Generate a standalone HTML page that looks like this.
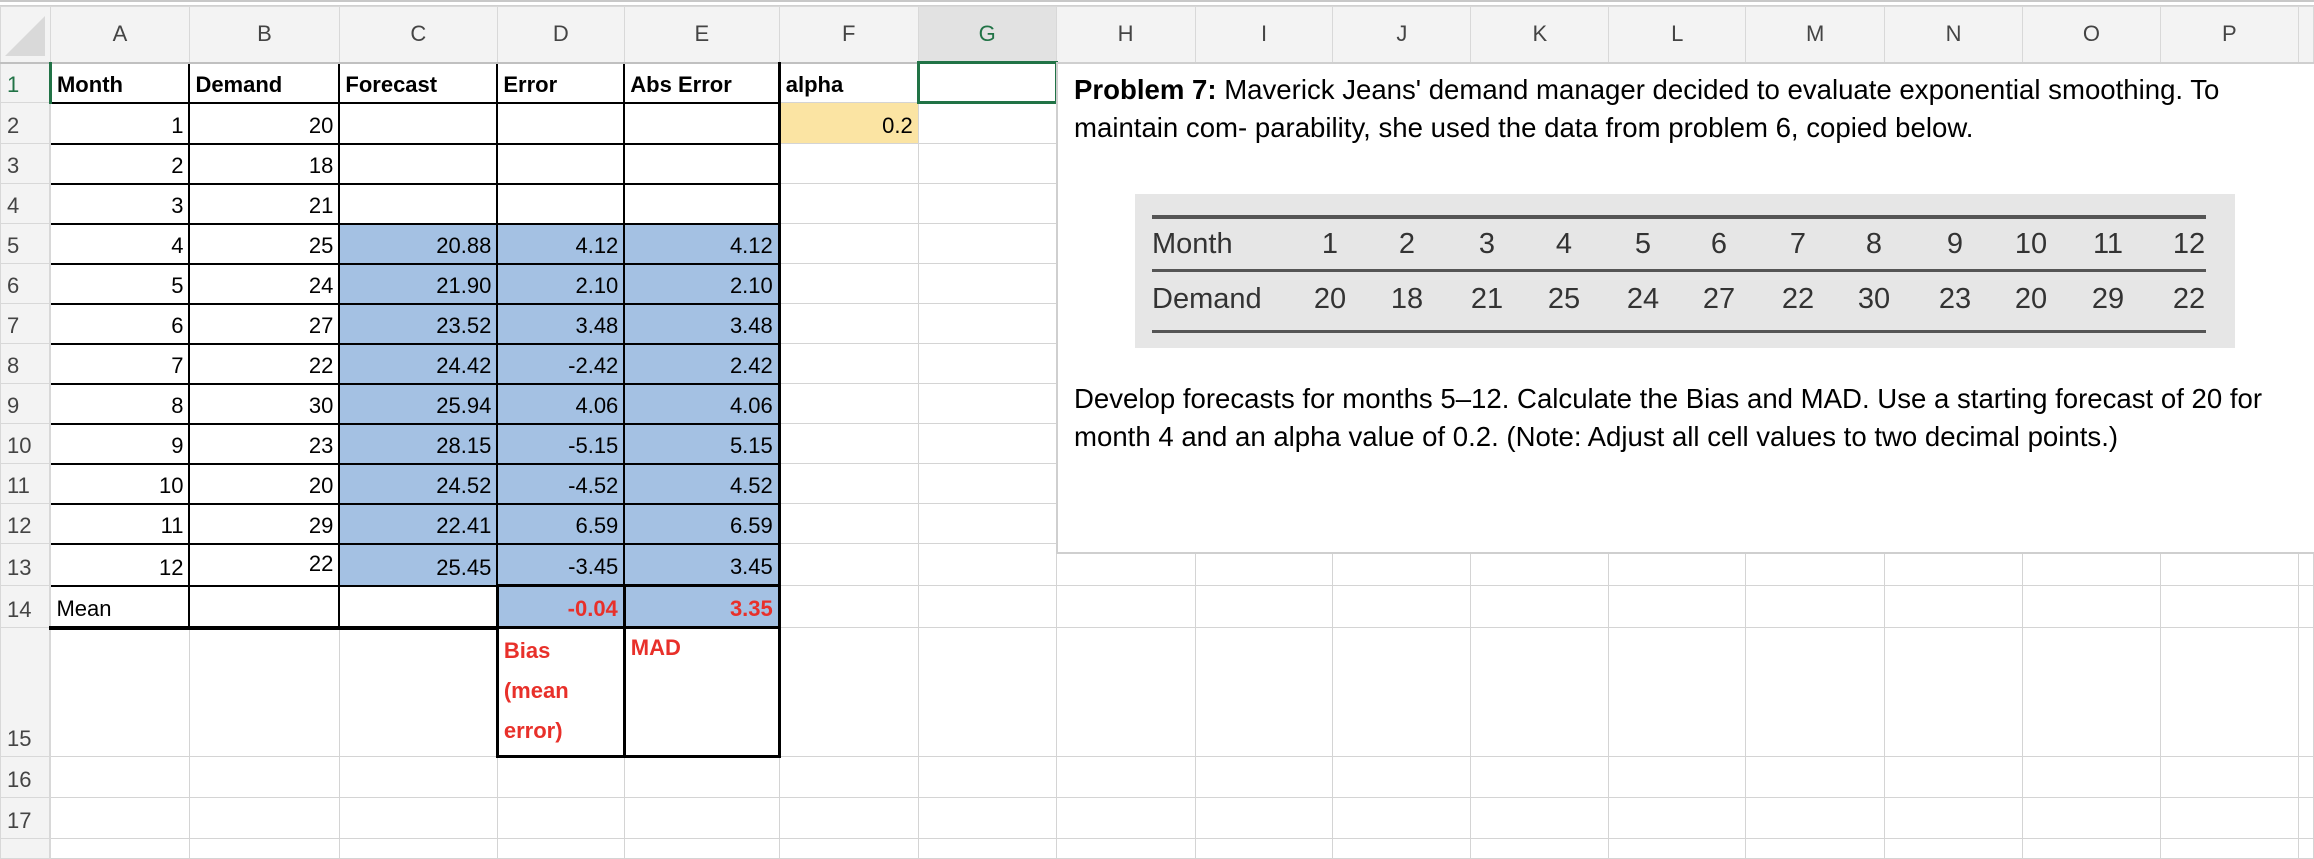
<!DOCTYPE html>
<html><head><meta charset="utf-8"><style>
*{margin:0;padding:0;box-sizing:border-box}
body{width:2314px;height:845px;overflow:hidden;background:#fff;font-family:"Liberation Sans",Arial,sans-serif;position:relative}
.top{position:absolute;left:0;top:0;width:2314px;height:6px;background:#fff;border-top:2px solid #c8c8c8;border-bottom:1px solid #d0d0d0}
table{position:absolute;left:0;top:6px;border-collapse:collapse;table-layout:fixed}
td{border:1px solid #d4d4d4;font-size:22px;color:#000;padding:0 5px;white-space:nowrap;overflow:visible;vertical-align:bottom;padding-bottom:4px}
tr.h td{background:#f3f3f3;color:#444;text-align:center;font-size:22px;vertical-align:middle;border-color:#d8d8d8;border-bottom:2px solid #c0c0c0;padding:0}
td.rh{background:#f3f3f3;color:#444;text-align:left;padding-left:6px;font-size:22px;border-right:2px solid #c0c0c0;border-color:#d8d8d8}
.r{text-align:right}
.b{font-weight:bold}
.bl{background:#a4c1e3}
.y{background:#fbe4a3}
.k{border:2px solid #000}
.kr{border-right:3px solid #000}
.red{color:#e8302a;font-weight:bold}
.box{position:absolute;left:1056px;top:62px;width:1262px;height:492px;background:#fff;border:2px solid #cfcfcf;border-right:none}
.ln{position:absolute;left:16px;font-size:28px;white-space:nowrap;transform:scaleX(0.985);transform-origin:left;color:#000}
.img{position:absolute;left:77px;top:130px;width:1100px;height:154px;background:#e6e6e6}
.hr{position:absolute;left:17px;width:1054px;height:4px;background:#555}
.t{position:absolute;font-size:29px;color:#333;transform:translateX(-50%);white-space:nowrap}
</style></head><body>
<div class="top"></div>
<table>
<colgroup><col style="width:50px"><col style="width:139px"><col style="width:150px"><col style="width:158px"><col style="width:127px"><col style="width:155px"><col style="width:139px"><col style="width:138px"><col style="width:139px"><col style="width:138px"><col style="width:138px"><col style="width:138px"><col style="width:137px"><col style="width:139px"><col style="width:138px"><col style="width:138px"><col style="width:138px"><col style="width:15px"></colgroup>
<tr class="h" style="height:56px"><td style="background:#f3f3f3"><svg width="44" height="44" style="display:block;margin:4px 0 0 2px"><polygon points="42,2 42,42 2,42" fill="#d9d9d9"/></svg></td><td>A</td><td>B</td><td>C</td><td>D</td><td>E</td><td>F</td><td style="color:#217346;background:#e2e2e2;border-bottom:2px solid #217346">G</td><td>H</td><td>I</td><td>J</td><td>K</td><td>L</td><td>M</td><td>N</td><td>O</td><td>P</td><td></td></tr>
<tr style="height:40px"><td class="rh" style="color:#217346">1</td><td class="k b" style="border-left:3px solid #217346">Month</td><td class="k b">Demand</td><td class="k b">Forecast</td><td class="k b">Error</td><td class="k b kr">Abs Error</td><td class="b">alpha</td><td style="border:3px solid #217346"></td><td></td><td></td><td></td><td></td><td></td><td></td><td></td><td></td><td></td><td></td></tr>
<tr style="height:41px"><td class="rh">2</td><td class="k r">1</td><td class="k r">20</td><td class="k"></td><td class="k"></td><td class="k kr"></td><td class="y r">0.2</td><td></td><td></td><td></td><td></td><td></td><td></td><td></td><td></td><td></td><td></td><td></td></tr>
<tr style="height:40px"><td class="rh">3</td><td class="k r">2</td><td class="k r">18</td><td class="k"></td><td class="k"></td><td class="k kr"></td><td></td><td></td><td></td><td></td><td></td><td></td><td></td><td></td><td></td><td></td><td></td><td></td></tr>
<tr style="height:40px"><td class="rh">4</td><td class="k r">3</td><td class="k r">21</td><td class="k"></td><td class="k"></td><td class="k kr"></td><td></td><td></td><td></td><td></td><td></td><td></td><td></td><td></td><td></td><td></td><td></td><td></td></tr>
<tr style="height:40px"><td class="rh">5</td><td class="k r">4</td><td class="k r">25</td><td class="k r bl">20.88</td><td class="k r bl">4.12</td><td class="k kr r bl">4.12</td><td></td><td></td><td></td><td></td><td></td><td></td><td></td><td></td><td></td><td></td><td></td><td></td></tr>
<tr style="height:40px"><td class="rh">6</td><td class="k r">5</td><td class="k r">24</td><td class="k r bl">21.90</td><td class="k r bl">2.10</td><td class="k kr r bl">2.10</td><td></td><td></td><td></td><td></td><td></td><td></td><td></td><td></td><td></td><td></td><td></td><td></td></tr>
<tr style="height:40px"><td class="rh">7</td><td class="k r">6</td><td class="k r">27</td><td class="k r bl">23.52</td><td class="k r bl">3.48</td><td class="k kr r bl">3.48</td><td></td><td></td><td></td><td></td><td></td><td></td><td></td><td></td><td></td><td></td><td></td><td></td></tr>
<tr style="height:40px"><td class="rh">8</td><td class="k r">7</td><td class="k r">22</td><td class="k r bl">24.42</td><td class="k r bl">-2.42</td><td class="k kr r bl">2.42</td><td></td><td></td><td></td><td></td><td></td><td></td><td></td><td></td><td></td><td></td><td></td><td></td></tr>
<tr style="height:40px"><td class="rh">9</td><td class="k r">8</td><td class="k r">30</td><td class="k r bl">25.94</td><td class="k r bl">4.06</td><td class="k kr r bl">4.06</td><td></td><td></td><td></td><td></td><td></td><td></td><td></td><td></td><td></td><td></td><td></td><td></td></tr>
<tr style="height:40px"><td class="rh">10</td><td class="k r">9</td><td class="k r">23</td><td class="k r bl">28.15</td><td class="k r bl">-5.15</td><td class="k kr r bl">5.15</td><td></td><td></td><td></td><td></td><td></td><td></td><td></td><td></td><td></td><td></td><td></td><td></td></tr>
<tr style="height:40px"><td class="rh">11</td><td class="k r">10</td><td class="k r">20</td><td class="k r bl">24.52</td><td class="k r bl">-4.52</td><td class="k kr r bl">4.52</td><td></td><td></td><td></td><td></td><td></td><td></td><td></td><td></td><td></td><td></td><td></td><td></td></tr>
<tr style="height:40px"><td class="rh">12</td><td class="k r">11</td><td class="k r">29</td><td class="k r bl">22.41</td><td class="k r bl">6.59</td><td class="k kr r bl">6.59</td><td></td><td></td><td></td><td></td><td></td><td></td><td></td><td></td><td></td><td></td><td></td><td></td></tr>
<tr style="height:42px"><td class="rh">13</td><td class="k r">12</td><td class="k r" style="vertical-align:top;padding-top:6px">22</td><td class="k r bl">25.45</td><td class="k r bl" style="border-bottom:3px solid #000">-3.45</td><td class="k kr r bl" style="border-bottom:3px solid #000">3.45</td><td></td><td></td><td></td><td></td><td></td><td></td><td></td><td></td><td></td><td></td><td></td><td></td></tr>
<tr style="height:42px"><td class="rh">14</td><td class="k" style="border-bottom:4px solid #000">Mean</td><td class="k" style="border-bottom:4px solid #000"></td><td class="k" style="border-bottom:4px solid #000"></td><td class="r bl red" style="border:3px solid #000">-0.04</td><td class="r bl red" style="border:3px solid #000">3.35</td><td></td><td></td><td></td><td></td><td></td><td></td><td></td><td></td><td></td><td></td><td></td><td></td></tr>
<tr style="height:128px"><td class="rh" style="vertical-align:bottom;padding-bottom:4px">15</td><td></td><td></td><td></td><td class="red" style="border:3px solid #000;vertical-align:top;line-height:40px;padding-top:2px">Bias<br>(mean<br>error)</td><td class="red" style="border:3px solid #000;vertical-align:top;padding-top:6px">MAD</td><td></td><td></td><td></td><td></td><td></td><td></td><td></td><td></td><td></td><td></td><td></td><td></td></tr>
<tr style="height:41px"><td class="rh">16</td><td></td><td></td><td></td><td></td><td></td><td></td><td></td><td></td><td></td><td></td><td></td><td></td><td></td><td></td><td></td><td></td><td></td></tr>
<tr style="height:41px"><td class="rh">17</td><td></td><td></td><td></td><td></td><td></td><td></td><td></td><td></td><td></td><td></td><td></td><td></td><td></td><td></td><td></td><td></td><td></td></tr>
<tr style="height:20px"><td class="rh"></td><td></td><td></td><td></td><td></td><td></td><td></td><td></td><td></td><td></td><td></td><td></td><td></td><td></td><td></td><td></td><td></td><td></td></tr>
</table>
<div class="box">
<div class="ln" style="top:10px"><b>Problem 7:</b> Maverick Jeans' demand manager decided to evaluate exponential smoothing. To</div>
<div class="ln" style="top:48px">maintain com- parability, she used the data from problem 6, copied below.</div>
<div class="img">
<div class="hr" style="top:21px"></div>
<div class="hr" style="top:75px;height:3px"></div>
<div class="hr" style="top:136px;height:3px"></div>
<div class="t" style="left:17px;top:34px;transform:none">Month</div>
<div class="t" style="left:17px;top:89px;transform:none">Demand</div>
<div class="t" style="left:195px;top:34px">1</div><div class="t" style="left:272px;top:34px">2</div><div class="t" style="left:352px;top:34px">3</div><div class="t" style="left:429px;top:34px">4</div><div class="t" style="left:508px;top:34px">5</div><div class="t" style="left:584px;top:34px">6</div><div class="t" style="left:663px;top:34px">7</div><div class="t" style="left:739px;top:34px">8</div><div class="t" style="left:820px;top:34px">9</div><div class="t" style="left:896px;top:34px">10</div><div class="t" style="left:973px;top:34px">11</div><div class="t" style="left:1054px;top:34px">12</div>
<div class="t" style="left:195px;top:89px">20</div><div class="t" style="left:272px;top:89px">18</div><div class="t" style="left:352px;top:89px">21</div><div class="t" style="left:429px;top:89px">25</div><div class="t" style="left:508px;top:89px">24</div><div class="t" style="left:584px;top:89px">27</div><div class="t" style="left:663px;top:89px">22</div><div class="t" style="left:739px;top:89px">30</div><div class="t" style="left:820px;top:89px">23</div><div class="t" style="left:896px;top:89px">20</div><div class="t" style="left:973px;top:89px">29</div><div class="t" style="left:1054px;top:89px">22</div>
</div>
<div class="ln" style="top:319px">Develop forecasts for months 5–12. Calculate the Bias and MAD. Use a starting forecast of 20 for</div>
<div class="ln" style="top:357px">month 4 and an alpha value of 0.2. (Note: Adjust all cell values to two decimal points.)</div>
</div>
</body></html>
